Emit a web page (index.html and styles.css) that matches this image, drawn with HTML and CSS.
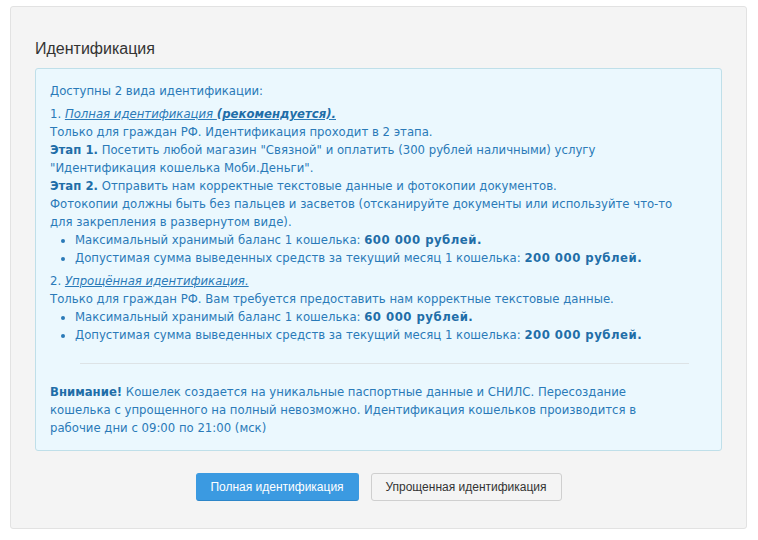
FILE: index.html
```html
<!DOCTYPE html>
<html lang="ru">
<head>
<meta charset="utf-8">
<link rel="stylesheet" href="styles.css">
</head>
<body>
<div class="panel">
  <h2 class="title">Идентификация</h2>
  <div class="info">
    <p class="para">Доступны 2 вида идентификации:</p>
    <p class="para tight">1. <a class="lnk" href="#">Полная идентификация <b>(рекомендуется).</b></a><br>
    Только для граждан РФ. Идентификация проходит в 2 этапа.<br>
    <b>Этап 1.</b> Посетить любой магазин "Связной" и оплатить (300 рублей наличными) услугу "Идентификация кошелька Моби.Деньги".<br>
    <b>Этап 2.</b> Отправить нам корректные текстовые данные и фотокопии документов.<br>
    Фотокопии должны быть без пальцев и засветов (отсканируйте документы или используйте что-то для закрепления в развернутом виде).</p>
    <ul class="list">
      <li>Максимальный хранимый баланс 1 кошелька: <b class="amt">600 000 рублей.</b></li>
      <li>Допустимая сумма выведенных средств за текущий месяц 1 кошелька: <b class="amt">200 000 рублей.</b></li>
    </ul>
    <p class="para tight">2. <a class="lnk" href="#">Упрощённая идентификация.</a><br>
    Только для граждан РФ. Вам требуется предоставить нам корректные текстовые данные.</p>
    <ul class="list">
      <li>Максимальный хранимый баланс 1 кошелька: <b class="amt">60 000 рублей.</b></li>
      <li>Допустимая сумма выведенных средств за текущий месяц 1 кошелька: <b class="amt">200 000 рублей.</b></li>
    </ul>
    <hr class="sep">
    <p class="para note"><b>Внимание!</b> Кошелек создается на уникальные паспортные данные и СНИЛС. Пересоздание кошелька с упрощенного на полный невозможно. Идентификация кошельков производится в рабочие дни с 09:00 по 21:00 (мск)</p>
  </div>
  <div class="actions">
    <button class="btn btn-primary">Полная идентификация</button>
    <button class="btn btn-default">Упрощенная идентификация</button>
  </div>
</div>
</body>
</html>
```

FILE: styles.css
```css
html, body {
  margin: 0;
  padding: 0;
  background: #fff;
}
body {
  padding: 6px 10px 0 10px;
  width: 738px;
  box-sizing: content-box;
}
.panel {
  width: 737px;
  box-sizing: border-box;
  background: #f4f4f4;
  border: 1px solid #e2e2e2;
  border-radius: 3px;
  padding: 30px 24px 27px 24px;
}
.title {
  margin: 0 0 7px 0;
  font-family: "Liberation Sans", Arial, sans-serif;
  font-weight: normal;
  font-size: 16px;
  line-height: 24px;
  color: #333;
}
.info {
  background: #ebf8fe;
  border: 1px solid #bfdfe9;
  border-radius: 3px;
  padding: 13px 36px 13px 14px;
  font-family: "DejaVu Sans", Verdana, sans-serif;
  font-size: 11.7px;
  line-height: 18px;
  color: #2a7ab8;
}
.para {
  margin: 0 0 5px 0;
}
.para.tight {
  margin-bottom: 0;
}
.info b {
  color: #1f6ea8;
}
.info .amt {
  letter-spacing: 0.5px;
}
.lnk {
  color: #2a7ab8;
  font-style: italic;
  text-decoration: underline;
}
.list {
  margin: 0 0 5px 0;
  padding-left: 25px;
}
.sep {
  border: 0;
  border-top: 1px solid #dde3e6;
  margin: 19px -4px 19px 30px;
}
.note {
  margin: 0;
}
.actions {
  display: flex;
  justify-content: center;
  gap: 12px;
  margin-top: 22px;
}
.btn {
  font-family: "Liberation Sans", Arial, sans-serif;
  font-size: 12px;
  height: 28px;
  border-radius: 3px;
  padding: 0;
  white-space: nowrap;
  cursor: pointer;
}
.btn-primary {
  width: 163px;
  background: #3b9ae1;
  color: #fff;
  border: 1px solid #3b9ae1;
  border-bottom-color: #2c85c8;
}
.btn-default {
  width: 191px;
  background: #f4f4f4;
  color: #333;
  border: 1px solid #cfcfcf;
}
```
